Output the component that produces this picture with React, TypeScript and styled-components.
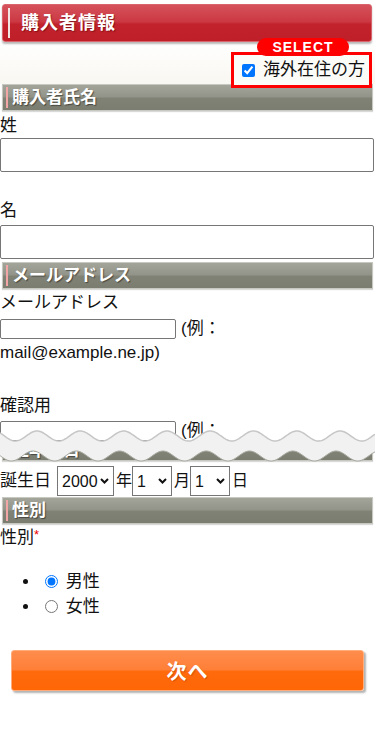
import React from 'react';
import styled, { createGlobalStyle } from 'styled-components';

const GlobalStyle = createGlobalStyle`
    html, body {
        margin: 0;
        padding: 0;
        background: #fff;
    }
    body {
        font-family: "Liberation Sans", "Noto Sans CJK JP", sans-serif;
        font-size: 17px;
        line-height: 24px;
        color: #111;
    }
`

const Page = styled.div`
    width: 375px;
    padding-top: 4px;
    padding-bottom: 30px;
`

const MainHeading = styled.h2`
    position: relative;
    box-sizing: border-box;
    height: 38px;
    margin: 0 3px 0 2px;
    padding-left: 18px;
    display: flex;
    align-items: center;
    border: 1px solid #d9646c;
    border-radius: 3px;
    background: linear-gradient(#d5525b 0%, #cc3943 46%, #c1222c 54%, #be1f29 100%);
    box-shadow: 0 2px 2px rgba(0, 0, 0, 0.28);
    color: #fff;
    font-size: 18px;
    font-weight: bold;
    letter-spacing: 1px;
    text-shadow: 1px 1px 1px rgba(80, 0, 0, 0.5);
    &::before {
        content: '';
        position: absolute;
        left: 5px;
        top: 3px;
        bottom: 3px;
        width: 2px;
        background: #f3e4e4;
    }
`

const OptionRow = styled.div`
    height: 42px;
    display: flex;
    justify-content: flex-end;
    align-items: flex-end;
    padding-right: 3px;
    background: linear-gradient(#ffffff, #f8f7f1);
`

const SelectFrame = styled.label`
    position: relative;
    z-index: 2;
    box-sizing: border-box;
    height: 36px;
    margin-bottom: -4px;
    padding: 0 4px 0 4px;
    display: flex;
    align-items: center;
    white-space: nowrap;
    border: 3px solid #ff0000;
    background: #fbfbf7;
    font-size: 17px;
    & input {
        margin: 3px 8px 3px 4px;
        width: 13px;
        height: 13px;
    }
`

const SelectBadge = styled.span`
    position: absolute;
    left: 23px;
    top: -17px;
    width: 92px;
    height: 18px;
    border-radius: 9px;
    background: #ff0000;
    color: #fff;
    font-size: 14px;
    font-weight: bold;
    line-height: 19px;
    letter-spacing: 1px;
    text-align: center;
`

const SectionTitle = styled.h3<{ $height?: number; $after?: number; $before?: number }>`
    position: relative;
    box-sizing: border-box;
    height: ${(p) => p.$height ?? 27}px;
    margin: ${(p) => p.$before ?? 0}px 2px ${(p) => p.$after ?? 0}px 2px;
    padding-left: 9px;
    display: flex;
    align-items: center;
    overflow: hidden;
    border: 1px solid #c7c8c0;
    background: linear-gradient(#a3a59a 0%, #929489 48%, #808276 52%, #7b7d71 100%);
    box-shadow: 0 1px 1px rgba(0, 0, 0, 0.15);
    color: #fff;
    font-size: 17px;
    font-weight: bold;
    text-shadow: 1px 1px 1px rgba(0, 0, 0, 0.45);
    &::before {
        content: '';
        position: absolute;
        left: 3px;
        top: 2px;
        bottom: 2px;
        width: 2px;
        background: #f2a6a6;
    }
`

const FieldLabel = styled.div<{ $gap?: number }>`
    height: 24px;
    margin-top: ${(p) => p.$gap ?? 2}px;
    line-height: 24px;
`

const Required = styled.span`
    color: #e00;
    font-size: 13px;
    vertical-align: top;
    line-height: 18px;
`

const WideInput = styled.input<{ $gap?: number }>`
    display: block;
    box-sizing: border-box;
    width: 374px;
    height: 34px;
    margin: ${(p) => p.$gap ?? 0}px 0 0 0;
    border: 1px solid #767676;
    border-radius: 2px;
    background: #fff;
`

const InputLine = styled.div<{ $gap?: number; $clip?: boolean }>`
    height: ${(p) => (p.$clip ? 22 : 24)}px;
    margin-top: ${(p) => p.$gap ?? 0}px;
    display: flex;
    align-items: ${(p) => (p.$clip ? 'flex-start' : 'center')};
    overflow: hidden;
    line-height: 24px;
`

const TextLine = styled.div`
    height: 24px;
    line-height: 24px;
`

const SmallInput = styled.input<{ $top?: number }>`
    box-sizing: border-box;
    flex: none;
    width: 176px;
    height: 20px;
    margin: ${(p) => p.$top ?? 0}px 5px 0 0;
    border: 1px solid #767676;
    border-radius: 2px;
    background: #fff;
`

const CutBlock = styled.div`
    position: relative;
    margin-top: 1px;
`

const TornEdge = styled.svg`
    position: absolute;
    left: 0;
    top: 5px;
    z-index: 3;
    pointer-events: none;
`

const BirthRow = styled.div`
    height: 30px;
    display: flex;
    align-items: center;
`

const BirthLabel = styled.span`
    margin-right: 6px;
`

const SelectWrap = styled.span`
    position: relative;
    display: inline-flex;
`

const DateSelect = styled.select<{ $w: number }>`
    box-sizing: border-box;
    width: ${(p) => p.$w}px;
    height: 30px;
    margin: 0;
    padding: 0 14px 0 4px;
    appearance: none;
    -webkit-appearance: none;
    border: 1px solid #767676;
    border-radius: 0;
    background: #fff;
    color: #111;
    font-family: "Liberation Sans", sans-serif;
    font-size: 16px;
`

const Chevron = styled.svg`
    position: absolute;
    right: 5px;
    top: 12px;
    pointer-events: none;
`

const Unit = styled.span`
    margin: 0 0 0 2px;
    font-size: 16px;
`

const GenderList = styled.ul`
    margin: 19px 0 0 0;
    padding-left: 40px;
    line-height: 25px;
`

const GenderItem = styled.li`
    height: 25px;
    & input {
        margin: 0 3px 0 5px;
        width: 13px;
        height: 13px;
        vertical-align: -1px;
    }
`

const NextButton = styled.button`
    display: block;
    box-sizing: border-box;
    width: 353px;
    height: 41px;
    margin: 31px 0 0 11px;
    border: 1px solid #ffab7a;
    border-radius: 3px;
    background: linear-gradient(#ff8d4c 0%, #ff7f37 48%, #ff6a0c 52%, #ff6606 100%);
    box-shadow: 2px 2px 2px rgba(0, 0, 0, 0.3);
    color: #fff;
    font-family: "Liberation Sans", "Noto Sans CJK JP", sans-serif;
    font-size: 20px;
    font-weight: bold;
    letter-spacing: 1px;
    text-shadow: 1px 1px 1px rgba(150, 50, 0, 0.4);
`

const WAVE = 43.3

const edge = (x: number, mid: number, phase: number) =>
    mid - 5 * Math.cos((2 * Math.PI * (x - phase)) / WAVE)

const buildWave = () => {
    const top: string[] = []
    const bottom: string[] = []
    for (let x = 0; x <= 375; x += 1) {
        top.push(`${x},${edge(x, 12, 37).toFixed(2)}`)
        bottom.push(`${x},${edge(x, 32, 33).toFixed(2)}`)
    }
    const fill = `M${top.join(' L')} L${bottom.slice().reverse().join(' L')} Z`
    return { fill, top: `M${top.join(' L')}`, bottom: `M${bottom.join(' L')}` }
}

const Torn: React.FC = () => {
    const wave = buildWave()
    return (
        <TornEdge width="375" height="42" viewBox="0 0 375 42">
            <path d={wave.fill} fill="#f1f1f1" />
            <path d={wave.top} fill="none" stroke="#c6c6c6" strokeWidth="1.5" />
            <path d={wave.bottom} fill="none" stroke="#a9aba2" strokeWidth="1" />
        </TornEdge>
    )
}

const range = (from: number, to: number) =>
    Array.from({ length: to - from + 1 }, (_, i) => from + i)

interface PickerProps {
    width: number
    value: string
    options: number[]
}

const Picker: React.FC<PickerProps> = ({ width, value, options }) => (
    <SelectWrap>
        <DateSelect $w={width} defaultValue={value}>
            {options.map((o) => (
                <option key={o} value={String(o)}>{o}</option>
            ))}
        </DateSelect>
        <Chevron width="9" height="6" viewBox="0 0 9 6">
            <path d="M1 1 L4.5 4.5 L8 1" fill="none" stroke="#111" strokeWidth="2" />
        </Chevron>
    </SelectWrap>
)

const App: React.FC = () => {
    return (
        <>
            <GlobalStyle />
            <Page>
                <MainHeading>購入者情報</MainHeading>
                <OptionRow>
                    <SelectFrame>
                        <SelectBadge>SELECT</SelectBadge>
                        <input type="checkbox" defaultChecked />
                        海外在住の方
                    </SelectFrame>
                </OptionRow>

                <SectionTitle>購入者氏名</SectionTitle>
                <FieldLabel $gap={3}>姓</FieldLabel>
                <WideInput type="text" />
                <FieldLabel $gap={27}>名</FieldLabel>
                <WideInput type="text" $gap={2} />

                <SectionTitle $before={3}>メールアドレス</SectionTitle>
                <FieldLabel>メールアドレス</FieldLabel>
                <InputLine $gap={2}>
                    <SmallInput type="text" />
                    (例：
                </InputLine>
                <TextLine>mail@example.ne.jp)</TextLine>
                <FieldLabel $gap={29}>確認用</FieldLabel>

                <CutBlock>
                    <InputLine $clip>
                        <SmallInput type="text" $top={2} />
                        (例：
                    </InputLine>
                    <SectionTitle $height={20} $after={5}>生年月日</SectionTitle>
                    <Torn />
                </CutBlock>

                <BirthRow>
                    <BirthLabel>誕生日</BirthLabel>
                    <Picker width={57} value="2000" options={range(1920, 2024)} />
                    <Unit>年</Unit>
                    <Picker width={40} value="1" options={range(1, 12)} />
                    <Unit>月</Unit>
                    <Picker width={40} value="1" options={range(1, 31)} />
                    <Unit>日</Unit>
                </BirthRow>

                <SectionTitle $before={1}>性別</SectionTitle>
                <FieldLabel>
                    性別<Required>*</Required>
                </FieldLabel>
                <GenderList>
                    <GenderItem>
                        <label>
                            <input type="radio" name="sex" defaultChecked /> 男性
                        </label>
                    </GenderItem>
                    <GenderItem>
                        <label>
                            <input type="radio" name="sex" /> 女性
                        </label>
                    </GenderItem>
                </GenderList>

                <NextButton type="button">次へ</NextButton>
            </Page>
        </>
    )
}

export default App;
